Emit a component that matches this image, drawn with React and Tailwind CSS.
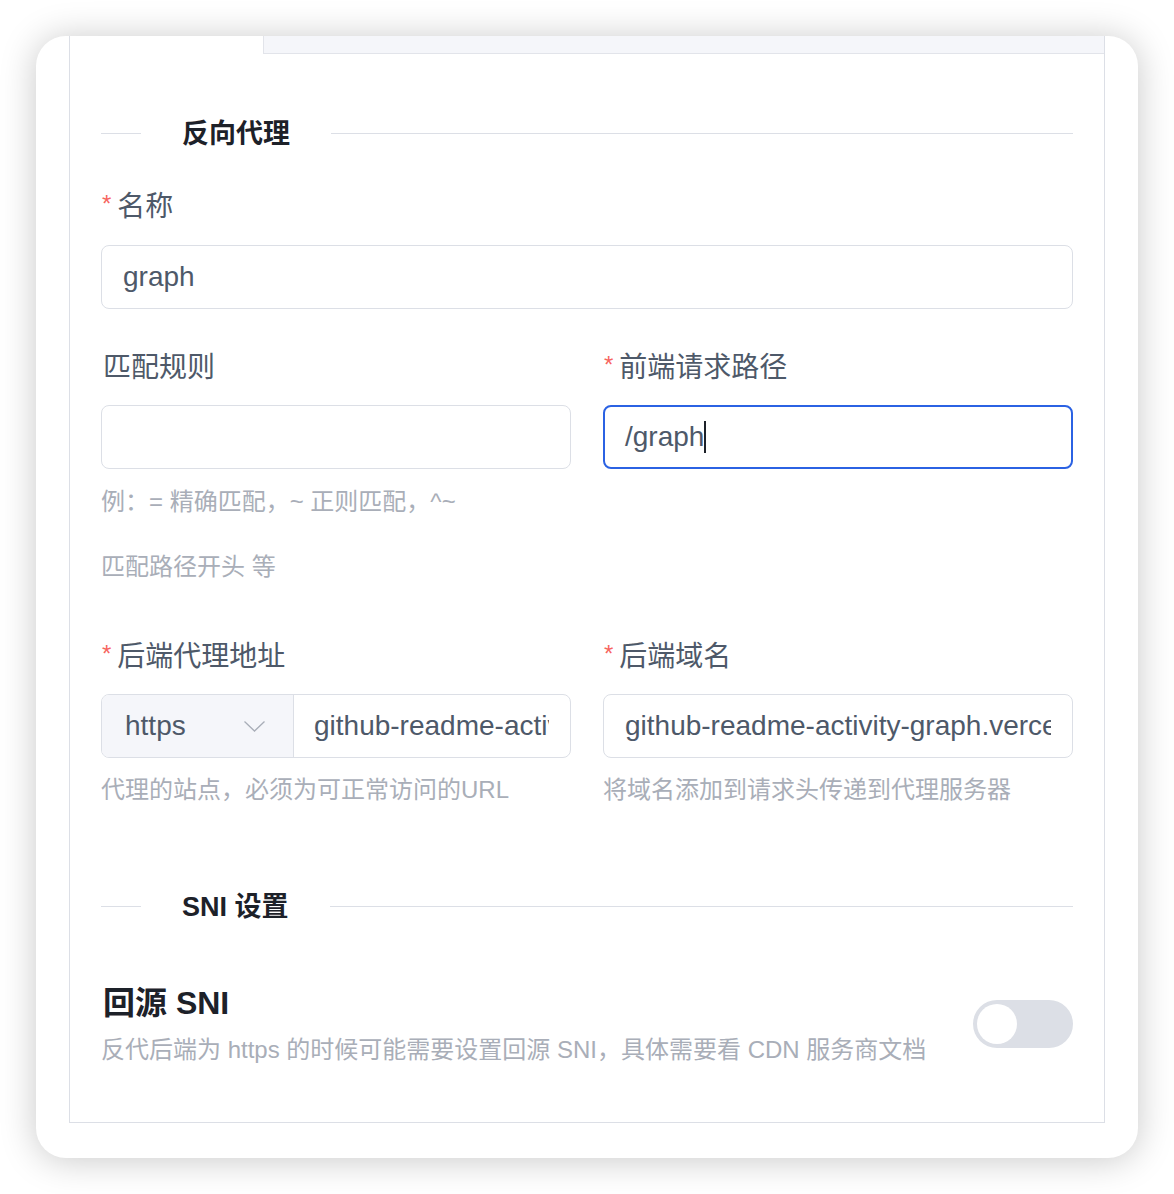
const font = { fontFamily: '"Liberation Sans", "Noto Sans CJK SC", sans-serif' };

export default function App() {
  return (
    <div className="w-[1174px] h-[1194px] bg-white pt-[36px] px-[36px] overflow-hidden" style={font}>
      <div className="w-[1102px] rounded-[30px] bg-white px-[33px] pb-[35px] shadow-[0_2px_36px_rgba(0,0,0,0.22)]">
        <div className="border-x border-b border-[#dcdfe6] bg-white">
          {/* tabs strip */}
          <div className="flex h-[18px]">
            <div className="w-[193px]" />
            <div className="flex-1 bg-[#f5f6fa] border-l border-b border-[#e2e4ea]" />
          </div>

          <div className="px-[31px] pb-[54px]">
            <SectionTitle title="反向代理" className="mt-[61px]" />

            <Label required className="mt-[36px]">名称</Label>
            <TextBox className="mt-[18px]">graph</TextBox>

            <div className="grid grid-cols-2 gap-x-[32px] items-start mt-[39px]">
              <div>
                <Label>匹配规则</Label>
                <TextBox className="mt-[17px]" />
                <Help className="mt-[13px]">例：= 精确匹配，~ 正则匹配，^~</Help>
                <Help className="mt-[25px]">匹配路径开头 等</Help>
              </div>
              <div>
                <Label required>前端请求路径</Label>
                <div className="mt-[17px] h-[64px] rounded-[8px] border-2 border-[#2b62e3] pl-[20px] flex items-center text-[28px] text-[#4e5969]">
                  <span>/graph</span>
                  <span className="w-[2px] h-[32px] bg-[#1d2129]" />
                </div>
              </div>
            </div>

            <div className="grid grid-cols-2 gap-x-[32px] items-start mt-[50px]">
              <div>
                <Label required>后端代理地址</Label>
                <div className="mt-[17px] h-[64px] rounded-[8px] border border-[#dcdfe6] flex overflow-hidden">
                  <div className="w-[192px] flex-none bg-[#f5f6fa] border-r border-[#dcdfe6] flex items-center justify-between pl-[23px] pr-[28px]">
                    <span className="text-[28px] text-[#4e5969]">https</span>
                    <svg width="21" height="11" viewBox="0 0 21 11" fill="none">
                      <path d="M0.5 0.5 L10.5 10 L20.5 0.5" stroke="#a9aeb8" strokeWidth="1.3" />
                    </svg>
                  </div>
                  <div className="flex-1 min-w-0 pl-[20px] pr-[21px] flex items-center">
                    <div className="overflow-hidden whitespace-nowrap text-[28px] text-[#4e5969]">
                      github-readme-activity-graph.vercel.app
                    </div>
                  </div>
                </div>
                <Help className="mt-[12px]">代理的站点，必须为可正常访问的URL</Help>
              </div>
              <div>
                <Label required>后端域名</Label>
                <div className="mt-[17px] h-[64px] rounded-[8px] border border-[#dcdfe6] pl-[21px] pr-[21px] flex items-center">
                  <div className="overflow-hidden whitespace-nowrap text-[28px] text-[#4e5969]">
                    github-readme-activity-graph.vercel.app
                  </div>
                </div>
                <Help className="mt-[12px]">将域名添加到请求头传递到代理服务器</Help>
              </div>
            </div>

            <SectionTitle title="SNI 设置" className="mt-[78px]" />

            <div className="mt-[59px] flex items-start justify-between">
              <div>
                <div className="text-[32px] leading-[40px] font-bold text-[#1d2129] pl-[2px]">回源 SNI</div>
                <div className="mt-[9px] text-[24px] leading-[36px] text-[#a9aeb8]">
                  反代后端为 https 的时候可能需要设置回源 SNI，具体需要看 CDN 服务商文档
                </div>
              </div>
              <div className="mt-[17px] w-[100px] h-[48px] rounded-full bg-[#dcdfe6] p-[4px] flex items-center">
                <div className="w-[40px] h-[40px] rounded-full bg-white" />
              </div>
            </div>
          </div>
        </div>
      </div>
    </div>
  );
}

function SectionTitle({ title, className = '' }) {
  return (
    <div className={`flex items-center h-[36px] ${className}`}>
      <div className="w-[40px] h-px bg-[#dcdfe6] flex-none" />
      <div className="mx-[41px] text-[27px] leading-[36px] font-semibold text-[#1d2129] whitespace-nowrap translate-y-[1px]">{title}</div>
      <div className="flex-1 h-px bg-[#dcdfe6]" />
    </div>
  );
}

function Label({ required, children, className = '' }) {
  return (
    <div className={`flex items-center h-[40px] text-[28px] leading-[40px] text-[#4e5969] ${className}`}>
      {required && <span className="text-[#f76560] text-[24px] mr-[6px] pl-[1px] -mt-[6px]">*</span>}
      <span className={required ? '' : 'pl-[2px]'}>{children}</span>
    </div>
  );
}

function TextBox({ children, className = '' }) {
  return (
    <div className={`h-[64px] rounded-[8px] border border-[#dcdfe6] pl-[21px] flex items-center text-[28px] text-[#4e5969] ${className}`}>
      {children}
    </div>
  );
}

function Help({ children, className = '' }) {
  return <div className={`text-[24px] leading-[40px] text-[#a9aeb8] ${className}`}>{children}</div>;
}
